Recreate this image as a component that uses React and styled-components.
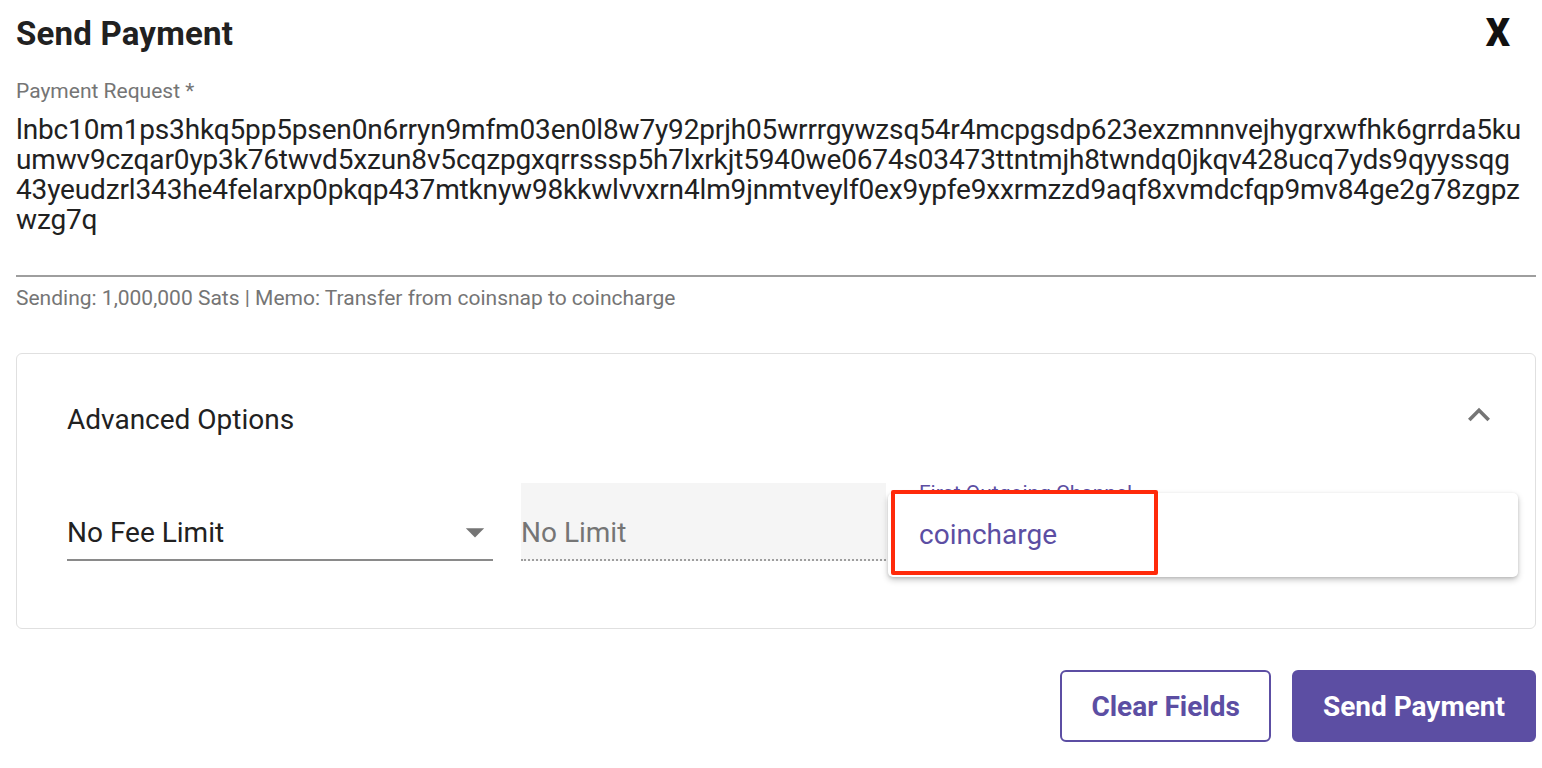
import React from 'react';
import styled, { createGlobalStyle } from 'styled-components';

const purple = '#5c4ea3';

const GlobalStyle = createGlobalStyle`
  body {
    margin: 0;
    background: #ffffff;
    font-family: Roboto, "Noto Sans", "Liberation Sans", sans-serif;
    color: #212121;
  }
`;

const requestLines = [
  'lnbc10m1ps3hkq5pp5psen0n6rryn9mfm03en0l8w7y92prjh05wrrrgywzsq54r4mcpgsdp623exzmnnvejhygrxwfhk6grrda5ku',
  'umwv9czqar0yp3k76twvd5xzun8v5cqzpgxqrrsssp5h7lxrkjt5940we0674s03473ttntmjh8twndq0jkqv428ucq7yds9qyyssqg',
  '43yeudzrl343he4felarxp0pkqp437mtknyw98kkwlvvxrn4lm9jnmtveylf0ex9ypfe9xxrmzzd9aqf8xvmdcfqp9mv84ge2g78zgpz',
  'wzg7q',
];

export default function App() {
  return (
    <Page>
      <GlobalStyle />
      <Header>
        <Title>Send Payment</Title>
        <CloseButton>X</CloseButton>
      </Header>

      <RequestField>
        <FieldLabel>Payment Request *</FieldLabel>
        <RequestText>
          {requestLines.map((line) => (
            <RequestLine key={line}>{line}</RequestLine>
          ))}
        </RequestText>
      </RequestField>
      <HelperText>Sending: 1,000,000 Sats | Memo: Transfer from coinsnap to coincharge</HelperText>

      <OptionsCard>
        <OptionsHeader>
          <OptionsTitle>Advanced Options</OptionsTitle>
          <svg width="44" height="44" viewBox="0 0 24 24" fill="#757575">
            <path d="M12 8l-6 6 1.41 1.41L12 10.83l4.59 4.58L18 14z" />
          </svg>
        </OptionsHeader>
        <FeeRow>
          <SelectField>
            <span>No Fee Limit</span>
            <svg width="44" height="44" viewBox="0 0 24 24" fill="#757575">
              <path d="M7 10l5 5 5-5z" />
            </svg>
          </SelectField>
          <DisabledInput>No Limit</DisabledInput>
          <ChannelField>
            <ChannelLabel>First Outgoing Channel</ChannelLabel>
            <Menu>
              <MenuItem>coincharge</MenuItem>
            </Menu>
            <Highlight />
          </ChannelField>
        </FeeRow>
      </OptionsCard>

      <Actions>
        <Button>Clear Fields</Button>
        <Button primary>Send Payment</Button>
      </Actions>
    </Page>
  );
}

const Page = styled.div`
  padding: 0 6px 20px 16px;
`;

const Header = styled.div`
  display: flex;
  justify-content: space-between;
  align-items: center;
  height: 66px;
  margin-bottom: 14px;
`;

const Title = styled.h1`
  margin: 0;
  font-size: 33px;
  font-weight: 700;
  letter-spacing: 0.2px;
  color: #212121;
`;

const CloseButton = styled.div`
  font-size: 38px;
  font-weight: 900;
  color: #111;
  margin-right: 26px;
  cursor: pointer;
`;

const RequestField = styled.div`
  display: flex;
  flex-direction: column;
  border-bottom: 2px solid #9e9e9e;
  padding-bottom: 40px;
`;

const FieldLabel = styled.label`
  font-size: 21px;
  color: #757575;
  line-height: 22px;
  margin-bottom: 13px;
`;

const RequestText = styled.div`
  font-size: 28px;
  line-height: 30px;
  color: #212121;
  letter-spacing: -0.15px;
`;

const RequestLine = styled.div`
  white-space: nowrap;
`;

const HelperText = styled.p`
  margin: 10px 0 0;
  font-size: 21px;
  line-height: 22px;
  color: #757575;
`;

const OptionsCard = styled.section`
  margin-top: 44px;
  border: 1px solid #e0e0e0;
  border-radius: 6px;
  padding: 27px 34px 67px 50px;
`;

const OptionsHeader = styled.div`
  display: flex;
  justify-content: space-between;
  align-items: center;
  height: 76px;
  svg {
    margin-bottom: 9px;
  }
`;

const OptionsTitle = styled.h2`
  margin: 0;
  font-size: 28px;
  font-weight: 400;
  color: #212121;
`;

const FeeRow = styled.div`
  display: flex;
  align-items: flex-end;
  gap: 28px;
  margin-top: 26px;
`;

const SelectField = styled.div`
  width: 426px;
  height: 78px;
  display: flex;
  align-items: center;
  justify-content: space-between;
  border-bottom: 2px solid #8a8a8a;
  box-sizing: border-box;
  font-size: 28px;
  color: #212121;
  padding-top: 22px;
  svg {
    margin-right: -4px;
  }
`;

const DisabledInput = styled.div`
  width: 365px;
  height: 78px;
  box-sizing: border-box;
  background: #f5f5f5;
  border-bottom: 2px dotted #9e9e9e;
  display: flex;
  align-items: center;
  padding-top: 22px;
  font-size: 28px;
  color: #757575;
`;

const ChannelField = styled.div`
  position: relative;
  flex: 1;
  height: 78px;
`;

const ChannelLabel = styled.div`
  position: absolute;
  left: 5px;
  top: -1px;
  font-size: 21px;
  line-height: 22px;
  color: ${purple};
`;

const Menu = styled.div`
  position: absolute;
  left: -26px;
  right: -17px;
  top: 10px;
  height: 84px;
  background: #fff;
  border-radius: 5px;
  box-shadow: 0 3px 6px rgba(0, 0, 0, 0.22), 0 1px 3px rgba(0, 0, 0, 0.12);
  display: flex;
  align-items: center;
`;

const MenuItem = styled.div`
  padding-left: 31px;
  padding-bottom: 2px;
  font-size: 28px;
  color: ${purple};
`;

const Highlight = styled.div`
  position: absolute;
  left: -23px;
  top: 7px;
  width: 267px;
  height: 85px;
  box-sizing: border-box;
  border: 4px solid #ff2a0a;
  border-radius: 2px;
`;

const Actions = styled.div`
  display: flex;
  justify-content: flex-end;
  gap: 21px;
  margin-top: 41px;
`;

const Button = styled.button`
  height: 72px;
  padding: 0 29px;
  border-radius: 6px;
  border: 2px solid ${purple};
  background: ${(p) => (p.primary ? purple : '#fff')};
  color: ${(p) => (p.primary ? '#fff' : purple)};
  font-family: Roboto, "Noto Sans", "Liberation Sans", sans-serif;
  font-size: 28px;
  font-weight: 700;
  cursor: pointer;
`;
